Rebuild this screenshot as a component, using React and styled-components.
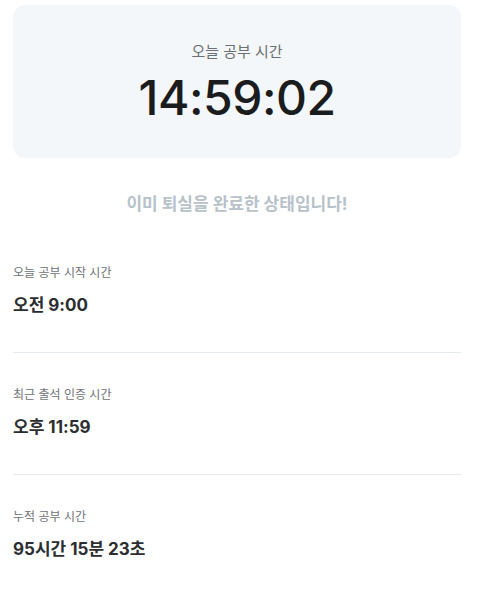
import React from 'react';
import styled, { createGlobalStyle } from 'styled-components';

const GlobalStyle = createGlobalStyle`
  body {
    margin: 0;
    background: #ffffff;
    font-family: Inter, "Noto Sans CJK KR", sans-serif;
  }
`;

const Page = styled.div`
  width: 448px;
  padding: 5px 13px;
`;

const TimerCard = styled.div`
  background-color: #f4f7f9;
  border-radius: 12px;
  padding: 36px 0 36px;
  text-align: center;
`;

const CardLabel = styled.div`
  font-size: 15px;
  line-height: 22px;
  color: #6b6f73;
`;

const Clock = styled.div`
  margin-top: 11px;
  font-size: 48px;
  line-height: 1;
  font-weight: 500;
  letter-spacing: -0.5px;
  color: #1b1c1e;
`;

const Notice = styled.p`
  margin: 33px 0 14px;
  text-align: center;
  font-size: 17px;
  line-height: 26px;
  font-weight: 700;
  color: #b7c2ca;
`;

const InfoItem = styled.div`
  padding: 33px 0 34px;
  border-bottom: ${({ last }) => (last ? 'none' : '1px solid #e5eaef')};
`;

const InfoLabel = styled.div`
  font-size: 12px;
  line-height: 18px;
  color: #6f7377;
`;

const InfoValue = styled.div`
  margin-top: 11px;
  font-size: 17px;
  line-height: 25px;
  font-weight: 700;
  color: #2b2d30;
`;

const items = [
  { label: '오늘 공부 시작 시간', value: '오전 9:00' },
  { label: '최근 출석 인증 시간', value: '오후 11:59' },
  { label: '누적 공부 시간', value: '95시간 15분 23초' },
];

const App = () => {
  return (
    <>
      <GlobalStyle />
      <Page>
        <TimerCard>
          <CardLabel>오늘 공부 시간</CardLabel>
          <Clock>14:59:02</Clock>
        </TimerCard>

        <Notice>이미 퇴실을 완료한 상태입니다!</Notice>

        {items.map((item, i) => (
          <InfoItem key={item.label} last={i === items.length - 1}>
            <InfoLabel>{item.label}</InfoLabel>
            <InfoValue>{item.value}</InfoValue>
          </InfoItem>
        ))}
      </Page>
    </>
  );
};

export default App;
